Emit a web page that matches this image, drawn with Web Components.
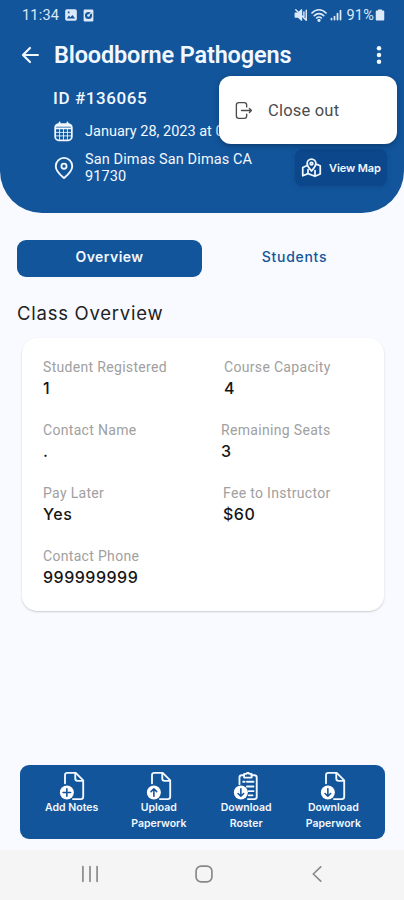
<!DOCTYPE html>
<html lang="en">
<head>
<meta charset="utf-8">
<meta name="viewport" content="width=device-width, initial-scale=1">
<title>Class Overview</title>
<style>
  html, body {
    height: 100%;
    margin: 0;
  }

  body {
    background: #f8faff;
    font-family: Roboto, sans-serif;
    overflow: hidden;
  }
</style>
</head>
<body>
<class-page></class-page>

<script>
const BLUE = '#12559b';

const ICONS = {
  image: `<path fill="currentColor" stroke="none" fill-rule="evenodd" d="M5 2h14a3 3 0 0 1 3 3v14a3 3 0 0 1-3 3H5a3 3 0 0 1-3-3V5a3 3 0 0 1 3-3zm0 16h14l-4.500-6-3.500 4-2.500-3zM6.500 6v3h3V6z"/>`,
  disc: `<path fill="currentColor" stroke="none" fill-rule="evenodd" d="M5 1h14a2 2 0 0 1 2 2v18a2 2 0 0 1-2 2H5a2 2 0 0 1-2-2V3a2 2 0 0 1 2-2zm7 4.500a6.500 6.500 0 1 0 0 13 6.500 6.500 0 0 0 0-13z"/><circle cx="12" cy="12" r="2.500" fill="currentColor" stroke="none"/><path d="m12 12 4-4.500" stroke-width="2"/>`,
  mute: `<path fill="currentColor" d="M2 8.500h5L13 3v18l-6-5.500H2z"/><path d="M17 7v10M21 4v16M3 3l18 18" stroke-width="2.500"/>`,
  wifi: `<path d="M1.500 9c6-6.500 15-6.500 21 0M5 13c4-4 10-4 14 0M8.500 16.500c2-2 5-2 7 0" stroke-width="2.500"/><circle cx="12" cy="20" r="1.500" fill="currentColor"/>`,
  signal: `<path d="M3 19v2M9 15v6M15 9v12M21 3v18" stroke-width="3.500"/>`,
  battery: `<path fill="currentColor" stroke="none" d="M8 1h8v2h2.500a2 2 0 0 1 2 2v16a2 2 0 0 1-2 2h-13a2 2 0 0 1-2-2V5a2 2 0 0 1 2-2H8z"/>`,
  back: `<path d="M21.500 12H3.500M12 3.500 3.500 12l8.500 8.500"/>`,
  more: `<g fill="currentColor" stroke="none"><circle cx="12" cy="4" r="2.700"/><circle cx="12" cy="12" r="2.700"/><circle cx="12" cy="20" r="2.700"/></g>`,
  calendar: `<rect x="2.500" y="3.500" width="19" height="18.500" rx="4"/><path d="M3 5.500h18M3 8.500h18M7.500 1.500v4M16.500 1.500v4"/><path stroke-width="1" d="M3 13h18M3 17h18M7.500 9v12M12 9v12M16.500 9v12"/>`,
  pin: `<path d="M12 23c-4-3.500-9-7.500-9-13a9 9 0 0 1 18 0c0 5.500-5 9.500-9 13z"/><circle cx="12" cy="10" r="2.800"/>`,
  map: `<path d="M6.500 10 2 12v9.500l6-2.500 8 3 6-2.500V10l-4-1.500M8 14.500V19M16 15.500V22"/><path d="M12 16c-2-2.500-5-5-5-8.500a5 5 0 0 1 10 0c0 3.500-3 6-5 8.500z"/><circle cx="12" cy="7.500" r="1.500"/>`,
  exit: `<path d="M16 7.500V5c0-2-1-3-3-3H6C4 2 3 3 3 5v14c0 2 1 3 3 3h7c2 0 3-1 3-3v-2.500M9.500 12H22M19.500 9.500 22 12l-2.500 2.500"/>`,
  file: `<path d="M7.500 12V3.500c0-1.500 1-2.500 2.500-2.500h9l8 8v17.500c0 1.500-1 2.500-2.500 2.500H16M18.500 1.500V7c0 1.500 1 2.500 2.500 2.500h5.500"/>`,
  clipboard: `<path d="M8 13V6c0-1.500 1-2.500 2.500-2.500H13M21 3.500h3c1.500 0 2.500 1 2.500 2.500v20.500c0 1.500-1 2.500-2.500 2.500h-7"/><path d="M13 2h2.500c.5-1.500 2.500-1.500 3 0H21v4h-8zM12 10.500h1.500M16 10.500h7M16 15.500h7M18 20.500h5M18 25h4"/>`,
  recents: `<path d="M3.500 3v18M12 3v18M20.500 3v18"/>`,
  home: `<rect x="2.500" y="2.500" width="19" height="19" rx="6"/>`,
  previous: `<path d="m16.500 3.500-9 8.500 9 8.500"/>`
};

// Drawn inside the round badge on the document icons
const BADGES = {
  add: 'M9.500 18v8M5.500 22h8',
  up: 'M9.500 26v-8M6.500 21l3-3 3 3',
  down: 'M9.500 18v8M6.500 23l3 3 3-3'
};

class BaseElement extends HTMLElement {
  constructor() {
    super();
    this.attachShadow( {mode: 'open'} );
  }

  connectedCallback() {
    const template = document.createElement( 'template' );
    template.innerHTML = this.template();
    this.shadowRoot.replaceChildren( template.content.cloneNode( true ) );
  }

  get icon() {
    return this.getAttribute( 'icon' );
  }
}

class AppIcon extends BaseElement {
  template() {
    const badge = this.getAttribute( 'badge' );
    const box = badge ? '0 0 30 30' : '0 0 24 24';

    return /* template */ `
      <style>
        :host {
          display: block;
          flex: none;
          height: var( --size, 20px );
          width: var( --size, 20px );
        }

        svg {
          display: block;
          fill: none;
          height: 100%;
          stroke: currentColor;
          stroke-linecap: round;
          stroke-linejoin: round;
          stroke-width: var( --stroke, 2 );
          width: 100%;
        }
      </style>
      <svg viewBox="${box}" aria-hidden="true">
        ${ICONS[this.icon]}
        ${badge ? `
          <circle cx="9.500" cy="22" r="7.500" fill="#fff" stroke="none"/>
          <path d="${BADGES[badge]}" stroke="${BLUE}" stroke-width="1.700"/>
        ` : ''}
      </svg>
    `;
  }
}

class StatusBar extends BaseElement {
  template() {
    return /* template */ `
      <style>
        :host {
          align-items: center;
          color: #dce9fa;
          display: flex;
          font-size: 14.5px;
          height: 30px;
          padding: 0 18px 0 22px;
        }

        span {
          letter-spacing: .2px;
        }

        .left {
          margin-right: 5px;
        }

        .right {
          margin: 0 0 0 4px;
        }

        app-icon {
          --size: 14px;
        }

        .gap {
          flex: 1;
        }
      </style>
      <span class="left">11:34</span>
      <app-icon icon="image"></app-icon>
      <app-icon icon="disc" style="--size: 13px; margin-left: 4px"></app-icon>
      <div class="gap"></div>
      <app-icon icon="mute"></app-icon>
      <app-icon icon="wifi" style="--size: 16px; margin-left: 3px"></app-icon>
      <app-icon icon="signal" style="--size: 12px; margin-left: 3px"></app-icon>
      <span class="right">91%</span>
      <app-icon icon="battery" style="--size: 12px"></app-icon>
    `;
  }
}

class ClassHeader extends BaseElement {
  template() {
    return /* template */ `
      <style>
        :host {
          background: ${BLUE};
          border-radius: 0 0 42px 42px;
          box-sizing: border-box;
          color: #f2f8ff;
          display: block;
          height: 213px;
          position: relative;
        }

        .title {
          align-items: center;
          display: flex;
          height: 50px;
          padding: 0 15px 0 20px;
        }

        h1 {
          flex: 1;
          font-size: 23.5px;
          font-weight: 600;
          letter-spacing: -.16px;
          margin: 0 0 0 14px;
          white-space: nowrap;
        }

        .details {
          padding: 0 17px 0 53px;
        }

        .id {
          font-size: 17px;
          font-weight: 500;
          letter-spacing: .6px;
          line-height: 36px;
        }

        .row {
          align-items: center;
          display: flex;
          font-size: 14.5px;
          letter-spacing: .12px;
          line-height: 17px;
        }

        .row app-icon {
          --size: 21px;
          margin-right: 11px;
        }

        .row p {
          flex: 1;
          margin: 0;
          white-space: nowrap;
        }

        .date {
          height: 31px;
        }

        .date p {
          letter-spacing: 0;
        }

        .place {
          height: 41px;
        }

        button {
          align-items: center;
          background: #0b478a;
          border: 0;
          border-radius: 8px;
          box-shadow: 0 1px 4px #0a3f7c80;
          color: inherit;
          display: flex;
          font: 600 11px Inter, sans-serif;
          gap: 7px;
          height: 37px;
          letter-spacing: -.1px;
          padding: 0 6px;
          white-space: nowrap;
          width: 92px;
        }

        button app-icon {
          --size: 19px;
          margin: 0 !important;
        }
      </style>
      <status-bar></status-bar>
      <div class="title">
        <app-icon icon="back" style="--stroke: 2.6"></app-icon>
        <h1>Bloodborne Pathogens</h1>
        <app-icon icon="more"></app-icon>
      </div>
      <div class="details">
        <div class="id">ID #136065</div>
        <div class="row date">
          <app-icon icon="calendar"></app-icon>
          <p>January 28, 2023 at 0</p>
        </div>
        <div class="row place">
          <app-icon icon="pin" style="--size: 22px; margin-right: 10px"></app-icon>
          <p>San Dimas San Dimas CA<br>91730</p>
          <button><app-icon icon="map"></app-icon>View Map</button>
        </div>
      </div>
    `;
  }
}

// Floats over the header, below the overflow button
class OverflowMenu extends BaseElement {
  template() {
    return /* template */ `
      <style>
        :host {
          align-items: center;
          background: #fff;
          border-radius: 12px;
          box-shadow: 0 2px 5px #06234a80;
          box-sizing: border-box;
          color: #4c4c4c;
          display: flex;
          font-size: 16.5px;
          height: 68px;
          left: 219px;
          letter-spacing: .2px;
          padding-left: 15px;
          position: absolute;
          top: 76px;
          width: 178px;
        }

        app-icon {
          --size: 19px;
          --stroke: 1.7;
          margin-right: 15px;
        }
      </style>
      <app-icon icon="${this.icon}"></app-icon>
      <slot></slot>
    `;
  }
}

class TabItem extends BaseElement {
  template() {
    return /* template */ `
      <style>
        :host {
          border-radius: 9px;
          box-sizing: border-box;
          color: ${BLUE};
          flex: 1;
          font: 500 14px/34px Inter, sans-serif;
          height: 37px;
          letter-spacing: .7px;
          text-align: center;
        }

        :host( [selected] ) {
          background: ${BLUE};
          color: #f2f8ff;
          font-weight: 600;
          letter-spacing: .45px;
        }
      </style>
      <slot></slot>
    `;
  }
}

class DataField extends BaseElement {
  template() {
    return /* template */ `
      <style>
        :host {
          display: block;
          height: 63.3px;
          white-space: nowrap;
        }

        .label {
          color: #a0a0a0;
          font-size: 14px;
          letter-spacing: .32px;
          line-height: 20px;
        }

        .value {
          color: #151515;
          font: 500 16px/22px Inter, sans-serif;
          letter-spacing: .5px;
        }
      </style>
      <div class="label">${this.getAttribute( 'label' )}</div>
      <div class="value"><slot></slot></div>
    `;
  }
}

class OverviewCard extends BaseElement {
  template() {
    return /* template */ `
      <style>
        :host {
          background: #fff;
          border-radius: 15px;
          box-shadow: 0 1px 2px #00000030;
          box-sizing: border-box;
          display: grid;
          grid-template-columns: 178px 1fr;
          align-content: start;
          height: 273px;
          margin: 0 20px 0 22px;
          padding: 18.6px 20px 0 21px;
        }
      </style>
      <slot></slot>
    `;
  }
}

class ActionItem extends BaseElement {
  template() {
    return /* template */ `
      <style>
        :host {
          align-items: center;
          color: #f2f8ff;
          display: flex;
          flex: 1;
          flex-direction: column;
          font: 600 10.5px/16px Inter, sans-serif;
          letter-spacing: 0;
          text-align: center;
        }

        app-icon {
          --size: 28px;
        }
      </style>
      <app-icon icon="${this.icon}" badge="${this.getAttribute( 'badge' )}"></app-icon>
      <span><slot></slot></span>
    `;
  }
}

class SystemNav extends BaseElement {
  template() {
    return /* template */ `
      <style>
        :host {
          align-items: center;
          background: #f5f5f5;
          box-sizing: border-box;
          color: #888;
          display: flex;
          height: 50px;
          justify-content: space-between;
          padding: 0 77px 2px 80px;
        }

        app-icon {
          --size: 20px;
        }
      </style>
      <app-icon icon="recents"></app-icon>
      <app-icon icon="home"></app-icon>
      <app-icon icon="previous"></app-icon>
    `;
  }
}

class ClassPage extends BaseElement {
  template() {
    return /* template */ `
      <style>
        :host {
          display: flex;
          flex-direction: column;
          height: 900px;
          position: relative;
          width: 404px;
        }

        nav {
          display: flex;
          margin: 27px 17px 0;
        }

        h2 {
          color: #222;
          font: 400 18.5px/24px Inter, sans-serif;
          letter-spacing: .75px;
          margin: 24px 17px 13px;
        }

        footer {
          background: ${BLUE};
          border-radius: 9px;
          box-sizing: border-box;
          display: flex;
          height: 74px;
          margin: auto 19px 11px 20px;
          padding: 7px 8px 0;
        }
      </style>
      <class-header></class-header>
      <overflow-menu icon="exit">Close out</overflow-menu>
      <nav>
        <tab-item selected>Overview</tab-item>
        <tab-item>Students</tab-item>
      </nav>
      <h2>Class Overview</h2>
      <overview-card>
        <data-field label="Student Registered">1</data-field>
        <data-field label="Course Capacity" style="margin-left: 3px">4</data-field>
        <data-field label="Contact Name">.</data-field>
        <data-field label="Remaining Seats">3</data-field>
        <data-field label="Pay Later">Yes</data-field>
        <data-field label="Fee to Instructor" style="margin-left: 2px">$60</data-field>
        <data-field label="Contact Phone">999999999</data-field>
      </overview-card>
      <footer>
        <action-item icon="file" badge="add">Add Notes</action-item>
        <action-item icon="file" badge="up">Upload<br>Paperwork</action-item>
        <action-item icon="clipboard" badge="down">Download<br>Roster</action-item>
        <action-item icon="file" badge="down">Download<br>Paperwork</action-item>
      </footer>
      <system-nav></system-nav>
    `;
  }
}

window.customElements.define( 'app-icon', AppIcon );
window.customElements.define( 'status-bar', StatusBar );
window.customElements.define( 'class-header', ClassHeader );
window.customElements.define( 'overflow-menu', OverflowMenu );
window.customElements.define( 'tab-item', TabItem );
window.customElements.define( 'data-field', DataField );
window.customElements.define( 'overview-card', OverviewCard );
window.customElements.define( 'action-item', ActionItem );
window.customElements.define( 'system-nav', SystemNav );
window.customElements.define( 'class-page', ClassPage );
</script>
</body>
</html>
